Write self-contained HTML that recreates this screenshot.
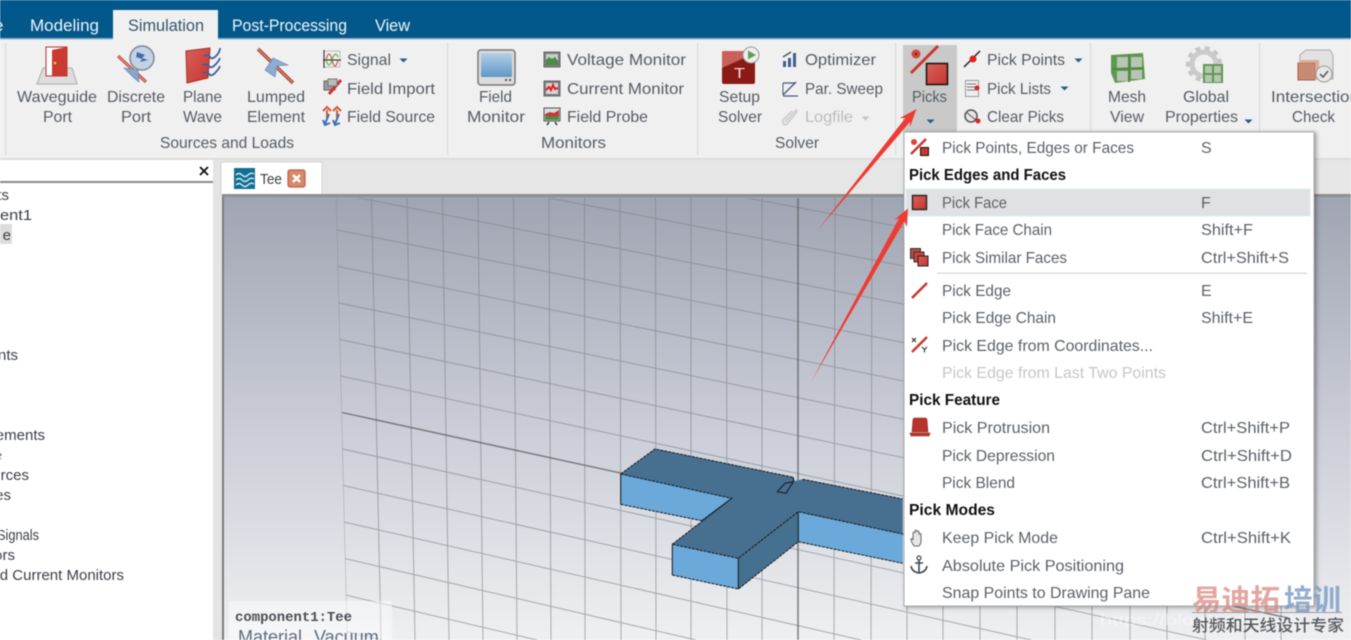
<!DOCTYPE html>
<html><head><meta charset="utf-8"><style>
html,body{margin:0;padding:0;background:#fff;overflow:hidden;width:1351px;height:640px}
#w{position:relative;width:1351px;height:640px;overflow:hidden}
svg{display:block;filter:blur(.5px)}
text{font-family:"Liberation Sans","Noto Sans CJK SC",sans-serif;font-size:16px;fill:#565c63}
.t{font-size:17px;fill:#f0f4f8}
.g{fill:#bdbdbd}
.b{font-weight:bold;fill:#111}
.m{fill:#5c6167}
.k{fill:#3c4046;font-size:15px}
.d{fill:#c4c6c8}
#info{position:absolute;left:229px;top:601px;width:163px;height:39px;overflow:hidden;filter:blur(.5px)}
#info span{position:absolute;white-space:nowrap;font-family:"Liberation Sans",sans-serif;font-size:18px;line-height:20px;color:#5c6c82;top:26px}
</style></head><body><div id="w">
<svg width="1351" height="640" viewBox="0 0 1351 640" xmlns="http://www.w3.org/2000/svg">
<defs>
<linearGradient id="bg" x1="0" y1="0" x2="0" y2="1"><stop offset="0" stop-color="#a0a5b3"/><stop offset=".45" stop-color="#c5c8d3"/><stop offset="1" stop-color="#eff0f2"/></linearGradient>
<linearGradient id="scr" x1="0" y1="0" x2="0" y2="1"><stop offset="0" stop-color="#b4d0e6"/><stop offset="1" stop-color="#5f97c8"/></linearGradient>
<linearGradient id="rd" x1="0" y1="0" x2="1" y2="1"><stop offset="0" stop-color="#d9605a"/><stop offset="1" stop-color="#c4362f"/></linearGradient>
<clipPath id="gc"><polygon points="336,198 1290,198 1290,640 347,640"/></clipPath>
<filter id="sh" x="-5%" y="-5%" width="110%" height="110%"><feDropShadow dx="2" dy="1" stdDeviation="2" flood-color="#000" flood-opacity=".35"/></filter>
</defs>

<!-- top bar -->
<rect width="1351" height="39" fill="#02588b"/>
<rect y="39" width="1351" height="120" fill="#f0f0f0"/>
<rect y="38" width="1351" height="1.5" fill="#8fb0c8"/>
<rect y="158" width="1351" height="2" fill="#dcdcdc"/>
<rect y="160" width="1351" height="36" fill="#e6e6e6"/>
<rect x="113" y="10" width="105" height="31" fill="#f0f0f0"/>
<text class="t" x="-6" y="31">e</text>
<text class="t" x="30" y="31" textLength="69" lengthAdjust="spacingAndGlyphs">Modeling</text>
<text class="t" x="128" y="31" textLength="76" lengthAdjust="spacingAndGlyphs" style="fill:#33566f">Simulation</text>
<text class="t" x="232" y="31" textLength="115" lengthAdjust="spacingAndGlyphs">Post-Processing</text>
<text class="t" x="375" y="31" textLength="35" lengthAdjust="spacingAndGlyphs">View</text>

<!-- separators -->
<g fill="#dadada"><rect x="5" y="43" width="1.2" height="112"/><rect x="447" y="43" width="1.2" height="112"/><rect x="697" y="43" width="1.2" height="112"/><rect x="895" y="43" width="1.2" height="112"/><rect x="1090" y="43" width="1.2" height="112"/><rect x="1259" y="43" width="1.2" height="112"/></g>

<!-- ribbon text -->
<text x="17" y="102" textLength="80" lengthAdjust="spacingAndGlyphs">Waveguide</text>
<text x="43" y="122" textLength="29" lengthAdjust="spacingAndGlyphs">Port</text>
<text x="107" y="102" textLength="58" lengthAdjust="spacingAndGlyphs">Discrete</text>
<text x="121" y="122" textLength="30" lengthAdjust="spacingAndGlyphs">Port</text>
<text x="183" y="102" textLength="39" lengthAdjust="spacingAndGlyphs">Plane</text>
<text x="183" y="122" textLength="39" lengthAdjust="spacingAndGlyphs">Wave</text>
<text x="247" y="102" textLength="58" lengthAdjust="spacingAndGlyphs">Lumped</text>
<text x="247" y="122" textLength="58" lengthAdjust="spacingAndGlyphs">Element</text>
<text x="347" y="65" textLength="44" lengthAdjust="spacingAndGlyphs">Signal</text>
<text x="347" y="94" textLength="88" lengthAdjust="spacingAndGlyphs">Field Import</text>
<text x="347" y="122" textLength="88" lengthAdjust="spacingAndGlyphs">Field Source</text>
<text x="160" y="148" textLength="134" lengthAdjust="spacingAndGlyphs">Sources and Loads</text>
<text x="479" y="102" textLength="33" lengthAdjust="spacingAndGlyphs">Field</text>
<text x="467" y="122" textLength="58" lengthAdjust="spacingAndGlyphs">Monitor</text>
<text x="567" y="65" textLength="119" lengthAdjust="spacingAndGlyphs">Voltage Monitor</text>
<text x="567" y="94" textLength="117" lengthAdjust="spacingAndGlyphs">Current Monitor</text>
<text x="567" y="122" textLength="81" lengthAdjust="spacingAndGlyphs">Field Probe</text>
<text x="541" y="148" textLength="65" lengthAdjust="spacingAndGlyphs">Monitors</text>
<text x="719" y="102" textLength="41" lengthAdjust="spacingAndGlyphs">Setup</text>
<text x="718" y="122" textLength="44" lengthAdjust="spacingAndGlyphs">Solver</text>
<text x="805" y="65" textLength="71" lengthAdjust="spacingAndGlyphs">Optimizer</text>
<text x="805" y="94" textLength="78" lengthAdjust="spacingAndGlyphs">Par. Sweep</text>
<text class="g" x="805" y="122" textLength="48" lengthAdjust="spacingAndGlyphs">Logfile</text>
<text x="775" y="148" textLength="44" lengthAdjust="spacingAndGlyphs">Solver</text>

<!-- picks button -->
<rect x="903" y="45" width="54" height="88" fill="#c9c9c9"/>
<text x="912" y="102" textLength="35" lengthAdjust="spacingAndGlyphs">Picks</text>
<text x="987" y="65" textLength="78" lengthAdjust="spacingAndGlyphs">Pick Points</text>
<text x="987" y="94" textLength="64" lengthAdjust="spacingAndGlyphs">Pick Lists</text>
<text x="987" y="122" textLength="77" lengthAdjust="spacingAndGlyphs">Clear Picks</text>
<text x="1108" y="102" textLength="38" lengthAdjust="spacingAndGlyphs">Mesh</text>
<text x="1110" y="122" textLength="34" lengthAdjust="spacingAndGlyphs">View</text>
<text x="1183" y="102" textLength="46" lengthAdjust="spacingAndGlyphs">Global</text>
<text x="1165" y="122" textLength="73" lengthAdjust="spacingAndGlyphs">Properties</text>
<text x="1271" y="102" textLength="88" lengthAdjust="spacingAndGlyphs">Intersection</text>
<text x="1292" y="122" textLength="43" lengthAdjust="spacingAndGlyphs">Check</text>

<!-- dropdown triangles -->
<g fill="#1d5f92"><path d="M399.500 58.500h8l-4 4z"/><path d="M1074.500 58.500h8l-4 4z"/><path d="M1060.500 86.500h8l-4 4z"/><path d="M1244.500 119.500h8l-4 4z"/><path d="M926.500 119.500h8l-4 4z"/></g>
<path d="M861.500 116.500h8l-4 4z" fill="#c4c4c4"/>

<!-- Waveguide port icon -->
<path d="M43 68h29l5 16H37z" fill="#dedede" stroke="#aaa"/>
<rect x="46" y="47" width="21" height="29" fill="#fff" stroke="#b5302a"/>
<path d="M52 50l15-3v29H52z" fill="#c93a32"/><circle cx="55" cy="63" r="1.300" fill="#f3c75e"/>
<!-- Discrete port -->
<path d="M118 56l28 26" stroke="#b33a2d" stroke-width="3"/><path d="M118 56l28 26" stroke="#e5b48f" stroke-width="1"/>
<circle cx="142" cy="58" r="12" fill="#c5d2e3" stroke="#7f8996" stroke-width="1.500"/>
<path d="M137 52l8 3-3 3 6 2-8 2 2-3-6-2z" fill="#3f6cad"/>
<path d="M124 68l14 2 1 12-6-5z" fill="#86a6d0" stroke="#5a7cab" stroke-width=".6"/>
<!-- Plane wave -->
<path d="M186 51l24-3-2 30-21 5z" fill="url(#rd)" stroke="#a82e27"/>
<g fill="none" stroke="#3e5e9e" stroke-width="1.800"><path d="M204 56q4-2 6 1t6-1 4-8"/><path d="M203 65q4-2 6 1t6-1 5-7"/><path d="M203 73q4-2 6 1t6-1 5-7"/></g>
<!-- Lumped element -->
<path d="M258 49l35 34" stroke="#a9372b" stroke-width="3.500"/><path d="M258 49l35 34" stroke="#dfaa86" stroke-width="1"/>
<path d="M265 70l8-12 15 7-11 1-2 11z" fill="#8dabd3" stroke="#5e80ae" stroke-width=".6"/>
<!-- Signal -->
<rect x="324" y="51" width="16" height="16" fill="#eee" stroke="#bbb"/><path d="M324 50v18M323 60h18" stroke="#222"/><path d="M326 60q3-12 6 0t6 0" fill="none" stroke="#c33"/><path d="M326 60q3 10 6 0t6-3" fill="none" stroke="#3a3"/>
<!-- Field import -->
<rect x="324" y="81" width="11" height="9" fill="#999" stroke="#666"/><path d="M341 80l-12 14" stroke="#c33" stroke-width="3"/><rect x="328" y="79" width="9" height="7" fill="#bbb" stroke="#777"/>
<!-- Field source -->
<g stroke="#d45a35" stroke-width="2" fill="none"><path d="M327 118V110M337 118V110M323 111l4-4 4 4M333 111l4-4 4 4"/></g>
<g stroke="#3e6fb6" stroke-width="2" fill="none"><path d="M329 114l-4 10M339 114l-4 10M323 120l2 5 5-2M333 120l2 5 5-2"/></g>
<!-- Field monitor -->
<rect x="478" y="50" width="37" height="35" rx="3" fill="#dcdcdc" stroke="#777" stroke-width="1.500"/><rect x="481" y="53" width="31" height="24" rx="1" fill="url(#scr)"/><rect x="505" y="79" width="2" height="2" fill="#555"/><rect x="509" y="79" width="2" height="2" fill="#555"/>
<!-- Small monitors -->
<rect x="544" y="52" width="16" height="15" fill="#7c7c7c" stroke="#666"/><rect x="546" y="54" width="12" height="11" fill="#c5d0c5"/><path d="M546 65v-5l3-3 3 2 3-2 3 4v4z" fill="#4d8b45"/>
<rect x="544" y="81" width="16" height="15" fill="#7c7c7c" stroke="#666"/><rect x="546" y="83" width="12" height="11" fill="#d8d4d4"/><path d="M546 90l3-3 2 3 2-5 2 4 3-1" fill="none" stroke="#d22" stroke-width="2"/>
<rect x="544" y="108" width="16" height="13" fill="#ddd" stroke="#555"/><path d="M545 114l5-2 4 1 5-3v6h-14z" fill="#c33"/><rect x="545" y="116" width="14" height="4" fill="#4d8b45"/><path d="M549 122l-2 3M555 122l2 3" stroke="#333" stroke-width="1.500"/>
<!-- Setup solver -->
<rect x="722" y="51" width="33" height="33" rx="2" fill="#8a1a14"/><path d="M722 53q0-2 2-2h29q2 0 2 2L722 68z" fill="#c9605a"/>
<text x="734" y="78" textLength="11" lengthAdjust="spacingAndGlyphs" style="font-size:15px;fill:#f3dcd8">T</text>
<circle cx="751" cy="55" r="8" fill="#eee" stroke="#999"/><path d="M748 50.500l8 4.500-8 4.500z" fill="#5da056"/>
<!-- Optimizer / Par sweep / Logfile -->
<g fill="#3f5f8f"><rect x="783" y="61" width="3" height="6"/><rect x="788" y="58" width="3" height="9"/><rect x="793" y="53" width="3" height="14"/></g><path d="M783 57l8-5" stroke="#555" stroke-width="1.500"/>
<path d="M783 95L796 82M783 83h13M783 96h15" fill="none" stroke="#47577e" stroke-width="1.300"/><path d="M783 83v12" stroke="#47577e"/>
<path d="M785 122l10-11q3-2 1 2l-9 11q-3 2-4-1t2-5l7-7" fill="none" stroke="#cfcfcf" stroke-width="1.800"/>
<!-- Big picks icon -->
<circle cx="916" cy="54" r="4.500" fill="#d9443a"/><circle cx="916" cy="54" r="1" fill="#222"/>
<path d="M911 73l27-27" stroke="#c9362e" stroke-width="3"/>
<rect x="926.500" y="63.500" width="21" height="21" fill="url(#rd)" stroke="#111" stroke-width="1.500"/>
<!-- Pick points/lists/clear -->
<path d="M964 67l16-16" stroke="#222" stroke-width="1.500"/><circle cx="973" cy="59" r="3.500" fill="#d22"/>
<rect x="965.500" y="80.500" width="13" height="16" fill="#eee" stroke="#999"/><path d="M967 84h9M967 87h9M967 90h9" stroke="#777"/><circle cx="977" cy="88" r="2.500" fill="#d22"/>
<circle cx="971" cy="116" r="6" fill="#e6e6e6" stroke="#555" stroke-width="1.500"/><path d="M966 112l11 9" stroke="#555"/><circle cx="978" cy="121" r="2.500" fill="#d22"/>
<!-- Mesh -->
<path d="M1111 55l32-2 2 26-30 4-4-10z" fill="#5e9950"/><path d="M1117 57h12v12h-12zM1131 57h11v11h-11zM1117 71h12v10h-12zM1131 70h11v9h-11z" fill="#b8c5b5"/><path d="M1129 54v28M1112 69l32-1" stroke="#4f8a42" stroke-width="2"/>
<!-- Global -->
<circle cx="1204" cy="64" r="12" fill="none" stroke="#cbcbcb" stroke-width="5"/><circle cx="1204" cy="64" r="16" fill="none" stroke="#c6c6c6" stroke-width="4" stroke-dasharray="5 4.500"/>
<rect x="1203" y="64" width="20" height="19" fill="#5e9950"/><path d="M1205 66h7v7h-7zM1214 66h7v7h-7zM1205 75h7v7h-7zM1214 75h7v7h-7z" fill="#b8c5b5"/>
<!-- Intersection -->
<path d="M1300 55l6-5h24l3 5v24h-26l-7-5z" fill="#e2e2e2" stroke="#aaa"/><rect x="1298" y="63" width="17" height="17" fill="#c98a74" stroke="#a85d45"/><path d="M1298 63l4-3h17l-4 3zM1315 63l4-3v15l-4 5z" fill="#dbaa98"/>
<circle cx="1324" cy="74" r="8" fill="#e8e8e8" stroke="#999"/><path d="M1320 74l3 3 5-6" fill="none" stroke="#555" stroke-width="1.500"/>

<!-- Left panel -->
<rect y="160" width="213" height="480" fill="#fff"/>
<rect y="181" width="213" height="2" fill="#8a8a8a"/>
<rect x="213" y="160" width="9" height="480" fill="#e4e4e4"/>
<path d="M200 167l8 8M208 167l-8 8" stroke="#111" stroke-width="1.800"/>
<rect y="224" width="12" height="20" fill="#dcdcdc"/>
<text class="k" x="9" y="200" text-anchor="end">ts</text>
<text class="k" x="0" y="220" textLength="32" lengthAdjust="spacingAndGlyphs">ent1</text>
<text class="k" x="11" y="240" text-anchor="end">e</text>
<text class="k" x="18" y="360" text-anchor="end">nts</text>
<text class="k" x="45" y="440" text-anchor="end">ements</text>
<text class="k" x="2" y="460" text-anchor="end">e</text>
<text class="k" x="29" y="480" text-anchor="end">rces</text>
<text class="k" x="11" y="500" text-anchor="end">es</text>
<text class="k" x="-3" y="540" textLength="42" lengthAdjust="spacingAndGlyphs">Signals</text>
<text class="k" x="15" y="560" text-anchor="end">ors</text>
<text class="k" x="124" y="580" text-anchor="end">d Current Monitors</text>

<!-- Tab -->
<rect x="221" y="162" width="101" height="33" fill="#fff" stroke="#d2d2d2"/>
<rect x="222" y="194" width="1129" height="3" fill="#8f8f8f"/>
<rect x="234" y="168" width="21" height="21" fill="#126f93"/>
<g fill="none" stroke="#d8edf5" stroke-width="1.300"><path d="M236 175q3-3 6 0t6 0 6-1"/><path d="M236 180q3-3 6 0t6 0 6-1"/><path d="M236 185q3-3 6 0t6 0 6-1"/></g>
<text x="260" y="184" textLength="22" lengthAdjust="spacingAndGlyphs" style="font-size:15px;fill:#3c4248">Tee</text>
<rect x="288" y="170" width="17" height="17" rx="2" fill="#d78a68" stroke="#c9594e" stroke-width="1.200"/>
<path d="M293 175l7 7M300 175l-7 7" stroke="#fff" stroke-width="2.400"/>

<!-- 3D view -->
<rect x="222" y="197" width="1129" height="443" fill="url(#bg)"/>
<rect x="222" y="197" width="2" height="443" fill="#7c7c7c"/>
<g clip-path="url(#gc)" stroke="#7e8086" stroke-width="1" fill="none" opacity=".62">
<path d="M336 198L347 640M371.500 198L381 640M407 198L415 640M442.500 198L449 640M478 198L483 640M513.500 198L517 640M549 198L551 640M584.500 198L585 640M620 198L621 640M655.500 198L656 640M691 198V640M726.500 198L727 640M762 198V640M835 198L834 640M872 198L871 640M907 198V640M943 198V640M980 198V640M1017 198V640M1055 198V640M1092 198V640M1130 198V640M1167 198V640M1205 198V640M1245 198V640M1281 198V640"/>
<path d="M747 198L1290 300M549 198L1290 339.800M337 193.700L1290 379.600M337 230L1290 419.400M337 266.300L1290 459.200M337 302.600L1290 499M337 338.900L1290 538.800M337 375.200L1290 578.600M337 447.800L1207 640M337 484.100L1031 640M337 520.400L861 640M337 556.700L696 640M337 593L537 640M337 629.300L382 640"/>
</g>
<g clip-path="url(#gc)" fill="none" stroke="#5f6066" opacity=".8">
<path d="M342 412.500L1290 618.400" stroke-width="1.400"/>
<path d="M798 198V640" stroke-width="1.500"/>
</g>

<!-- 3D shape -->
<g stroke-linejoin="round">
<polygon points="620.700,474 731.700,498.300 701.700,520.700 620.700,504.300" fill="#6aa9da"/>
<polygon points="672.300,544.300 738.300,558.300 738.300,589 672.300,575" fill="#6aa9da"/>
<polygon points="798.300,511.700 902.700,534 902.700,563.300 798.300,541.700" fill="#6aa9da"/>
<polygon points="738.300,558.300 798.300,511.700 798.300,541.700 738.300,589" fill="#46708f"/>
<polygon points="620.700,474 655,449 793.300,477.300 795,481 802.700,479.300 902.700,499 902.700,534 798.300,511.700 738.300,558.300 672.300,544.300 731.700,498.300" fill="#476f8f"/>
<g fill="none" stroke="#14181c" stroke-width="1" stroke-dasharray="3 1">
<path d="M620.700 474L655 449L793.300 477.300M802.700 479.300L902.700 499M620.700 474L731.700 498.300L701.700 520.700M620.700 504.300L701.700 520.700M672.300 544.300L738.300 558.300L798.300 511.700L902.700 534M672.300 544.300L731 498.800M672.300 575L738.300 589L798.300 541.700L902.700 563.300"/>
</g>
<path d="M620.700 474V504.300M672.300 544.300V575M738.300 558.300V589M798.300 511.700V541.700M793.300 477.300V481.700L786 493.300L777.300 491.700L785 483.300L793.300 481.700" fill="none" stroke="#14181c" stroke-width="1"/>
</g>

<!-- info box -->
<rect x="229" y="601" width="163" height="39" fill="#fff" opacity=".45"/>
<text x="235" y="621" textLength="117" lengthAdjust="spacingAndGlyphs" style="font-family:'Liberation Mono',monospace;font-weight:bold;font-size:14px;fill:#4a4e55">component1:Tee</text>

<!-- Menu -->
<rect x="904" y="132" width="410" height="474" fill="#fff" stroke="#a9a9a9" filter="url(#sh)"/>
<rect x="906" y="189" width="404" height="27" fill="#dfe1e2" stroke="#d8edf6"/>
<rect x="937" y="272.500" width="370" height="1.500" fill="#dedede"/>
<text class="b" x="909" y="180" textLength="157" lengthAdjust="spacingAndGlyphs">Pick Edges and Faces</text>
<text class="b" x="909" y="405" textLength="91" lengthAdjust="spacingAndGlyphs">Pick Feature</text>
<text class="b" x="909" y="515" textLength="86" lengthAdjust="spacingAndGlyphs">Pick Modes</text>
<text class="m" x="942" y="153" textLength="192" lengthAdjust="spacingAndGlyphs">Pick Points, Edges or Faces</text>
<text class="m" x="942" y="208" textLength="65" lengthAdjust="spacingAndGlyphs">Pick Face</text>
<text class="m" x="942" y="235" textLength="110" lengthAdjust="spacingAndGlyphs">Pick Face Chain</text>
<text class="m" x="942" y="263" textLength="125" lengthAdjust="spacingAndGlyphs">Pick Similar Faces</text>
<text class="m" x="942" y="296" textLength="69" lengthAdjust="spacingAndGlyphs">Pick Edge</text>
<text class="m" x="942" y="323" textLength="114" lengthAdjust="spacingAndGlyphs">Pick Edge Chain</text>
<text class="m" x="942" y="351" textLength="211" lengthAdjust="spacingAndGlyphs">Pick Edge from Coordinates...</text>
<text class="d" x="942" y="378" textLength="224" lengthAdjust="spacingAndGlyphs">Pick Edge from Last Two Points</text>
<text class="m" x="942" y="433" textLength="108" lengthAdjust="spacingAndGlyphs">Pick Protrusion</text>
<text class="m" x="942" y="461" textLength="113" lengthAdjust="spacingAndGlyphs">Pick Depression</text>
<text class="m" x="942" y="488" textLength="73" lengthAdjust="spacingAndGlyphs">Pick Blend</text>
<text class="m" x="942" y="543" textLength="116" lengthAdjust="spacingAndGlyphs">Keep Pick Mode</text>
<text class="m" x="942" y="571" textLength="182" lengthAdjust="spacingAndGlyphs">Absolute Pick Positioning</text>
<text class="m" x="942" y="598" textLength="208" lengthAdjust="spacingAndGlyphs">Snap Points to Drawing Pane</text>
<text class="m" x="1201" y="153">S</text>
<text class="m" x="1201" y="208">F</text>
<text class="m" x="1201" y="235" textLength="52" lengthAdjust="spacingAndGlyphs">Shift+F</text>
<text class="m" x="1201" y="263" textLength="88" lengthAdjust="spacingAndGlyphs">Ctrl+Shift+S</text>
<text class="m" x="1201" y="296">E</text>
<text class="m" x="1201" y="323" textLength="52" lengthAdjust="spacingAndGlyphs">Shift+E</text>
<text class="m" x="1201" y="433" textLength="89" lengthAdjust="spacingAndGlyphs">Ctrl+Shift+P</text>
<text class="m" x="1201" y="461" textLength="91" lengthAdjust="spacingAndGlyphs">Ctrl+Shift+D</text>
<text class="m" x="1201" y="488" textLength="89" lengthAdjust="spacingAndGlyphs">Ctrl+Shift+B</text>
<text class="m" x="1201" y="543" textLength="90" lengthAdjust="spacingAndGlyphs">Ctrl+Shift+K</text>

<!-- Menu icons -->
<circle cx="914" cy="142" r="3" fill="#d9443a"/><path d="M911 154l15-15" stroke="#c9362e" stroke-width="2.500"/><rect x="920.500" y="147.500" width="8" height="8" fill="#c9362e" stroke="#111"/>
<rect x="912.500" y="195.500" width="14" height="14" fill="url(#rd)" stroke="#222" stroke-width="1.400"/>
<rect x="910.500" y="248.500" width="10" height="10" fill="#b9483f" stroke="#333"/><rect x="914" y="252" width="10" height="10" fill="#c9453c" stroke="#333"/><rect x="918" y="256" width="10" height="10" fill="url(#rd)" stroke="#222"/>
<path d="M912 298l15-15" stroke="#c9362e" stroke-width="2.500"/>
<path d="M912 352l15-15" stroke="#c9362e" stroke-width="2.500"/><path d="M912 338l4 4M916 338l-4 4M922 347l2.500 2.500 2.500-2.500M924.500 349.500v3" stroke="#222" stroke-width="1" fill="none"/>
<path d="M913 420q0-2 2-2h10q2 0 2 2l1 12h-16zM910 433h20l-1 3h-18z" fill="#b8352d" stroke="#8c211b" stroke-width=".6"/>
<path d="M914 546q-3-4-3-7 1-1 2 1v-7q1-2 2 0v-2q1-2 2 0v1q1-2 2 0v2q1-1 2 0v7q0 3-2 5z" fill="#e6e6e6" stroke="#666" stroke-width="1"/>
<circle cx="919" cy="558" r="2" fill="none" stroke="#3b4753" stroke-width="1.200"/><path d="M919 560v13M915 563h8M911 566q1 6 8 7 7-1 8-7" fill="none" stroke="#3b4753" stroke-width="1.600"/>

<!-- Arrows -->
<path d="M817 231L905.400 118L900 118L916.500 109L910 127L910 121.800z" fill="#ee3b33"/>
<path d="M811 382L899.100 218.300L894 220L908 208.500L907 227L904.300 221.300z" fill="#ee3b33"/>

<!-- Watermark -->
<text x="1100" y="625" textLength="200" lengthAdjust="spacingAndGlyphs" style="font-size:15px;fill:#fff;opacity:.45">https://blog.csdn.net/</text>
<text x="1192" y="610" textLength="88" lengthAdjust="spacingAndGlyphs" style="font-family:'Noto Sans CJK SC',sans-serif;font-weight:bold;font-size:29px;fill:#d9857c;opacity:.72">易迪拓</text>
<text x="1284" y="610" textLength="57" lengthAdjust="spacingAndGlyphs" style="font-family:'Noto Sans CJK SC',sans-serif;font-weight:bold;font-size:29px;fill:#7f9fc8;opacity:.85">培训</text>
<rect x="1192" y="612" width="150" height="1" fill="#999"/>
<text x="1192" y="631" textLength="152" lengthAdjust="spacingAndGlyphs" style="font-family:'Noto Sans CJK SC',sans-serif;font-size:16px;fill:#55585c;font-weight:500">射频和天线设计专家</text>
</svg>
<div id="info"><span style="left:9px">Material</span><span style="left:85px">Vacuum</span></div>
</div></body></html>
